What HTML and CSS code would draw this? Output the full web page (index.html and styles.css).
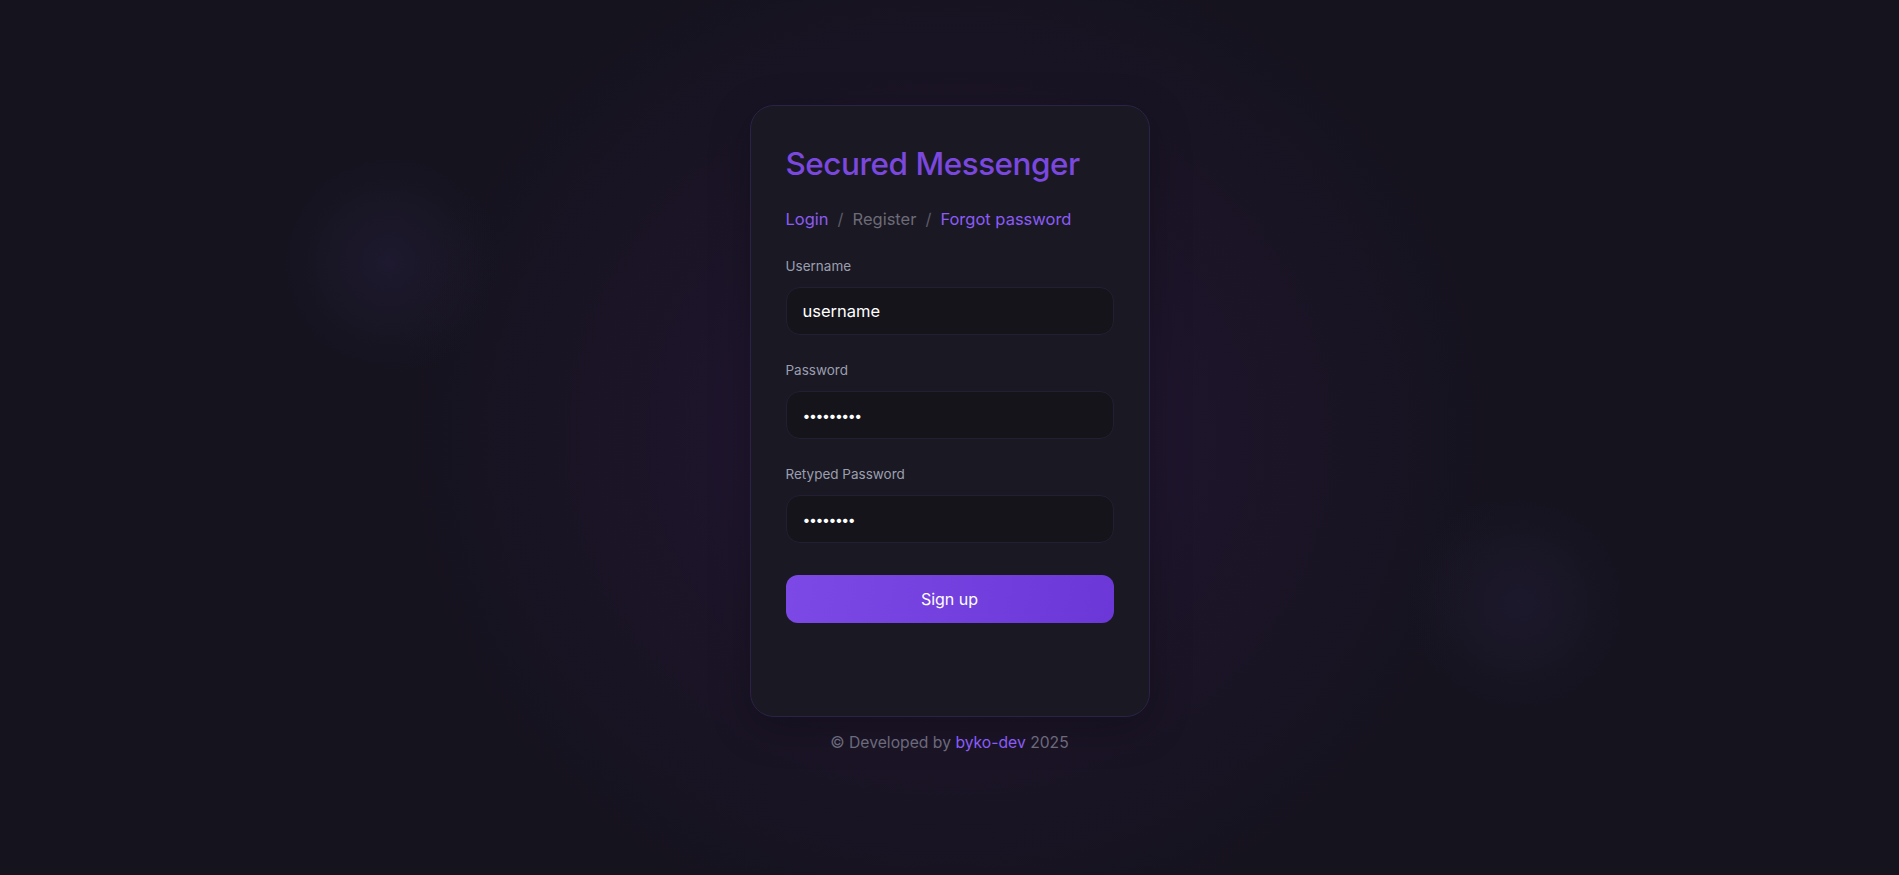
FILE: index.html
```html
<!DOCTYPE html>
<html lang="en">
<head>
<meta charset="utf-8">
<title>Secured Messenger</title>
<link rel="stylesheet" href="styles.css">
</head>
<body>
<main class="page">
  <section class="card">
    <h1 class="title">Secured Messenger</h1>
    <nav class="tabs">
      <a class="tab tab-link" href="#">Login</a>
      <span class="sep">/</span>
      <span class="tab tab-current">Register</span>
      <span class="sep">/</span>
      <a class="tab tab-link" href="#">Forgot password</a>
    </nav>
    <form class="form">
      <div class="field">
        <label class="label" for="u">Username</label>
        <input class="input" id="u" type="text" value="username">
      </div>
      <div class="field">
        <label class="label" for="p">Password</label>
        <input class="input input-pass" id="p" type="password" value="123456789">
      </div>
      <div class="field">
        <label class="label" for="r">Retyped Password</label>
        <input class="input input-pass" id="r" type="password" value="12345678">
      </div>
      <button class="btn" type="button">Sign up</button>
    </form>
    <div class="status"></div>
  </section>
  <footer class="footer">© Developed by <a class="footer-link" href="#">byko-dev</a> 2025</footer>
</main>
</body>
</html>
```

FILE: styles.css
```css
* { box-sizing: border-box; }
html, body { margin: 0; padding: 0; }
body {
  min-height: 100vh;
  background-color: #15131e;
  background-image:
    radial-gradient(circle at 20.5% 30%, rgba(40, 32, 66, 0.45) 0, rgba(40, 32, 66, 0) 110px),
    radial-gradient(circle at 80% 69%, rgba(40, 32, 66, 0.4) 0, rgba(40, 32, 66, 0) 110px),
    radial-gradient(ellipse 560px 520px at 50% 50%, rgba(42, 24, 62, 0.95) 0, rgba(34, 22, 50, 0.6) 45%, rgba(21, 19, 30, 0) 100%);
  font-family: Inter, "Noto Sans", sans-serif;
  color: #e8e8f0;
}
.page {
  display: flex;
  flex-direction: column;
  align-items: center;
  padding-top: 105px;
}
.card {
  width: 400px;
  background: #1a1822;
  border: 1px solid #2a2347;
  border-radius: 24px;
  padding: 38px 35px 0;
  box-shadow: 0 10px 40px rgba(0, 0, 0, 0.25);
}
.title {
  margin: 0;
  font-size: 31.5px;
  line-height: 40px;
  font-weight: 500;
  color: #7a47df;
  letter-spacing: -0.5px;
}
.tabs {
  margin-top: 23px;
  display: flex;
  align-items: center;
  gap: 9px;
  font-size: 16.5px;
  line-height: 24px;
}
.tab { text-decoration: none; }
.tab-link { color: #8b5cf6; }
.tab-current { color: #6c6b78; }
.sep { color: #5c5b68; }
.form {
  margin-top: 26px;
  display: flex;
  flex-direction: column;
}
.field {
  display: flex;
  flex-direction: column;
  gap: 12px;
  margin-bottom: 26px;
}
.label {
  font-size: 13.5px;
  line-height: 18px;
  color: #9a9fb0;
}
.input {
  height: 48px;
  width: 100%;
  background: #15141b;
  border: 1px solid #221f33;
  border-radius: 14px;
  padding: 0 16px;
  font-family: Inter, "Noto Sans", sans-serif;
  font-size: 16.5px;
  font-weight: 400;
  color: #ffffff;
  outline: none;
}
.input-pass {
  font-size: 14px;
  letter-spacing: -1.4px;
}
.btn {
  margin-top: 6px;
  height: 48px;
  width: 100%;
  border: none;
  border-radius: 12px;
  background: linear-gradient(100deg, #7c48e6 0%, #6b37d6 100%);
  color: #ffffff;
  font-family: Inter, "Noto Sans", sans-serif;
  font-size: 16px;
  font-weight: 400;
  cursor: pointer;
}
.status {
  height: 93px;
}
.footer {
  margin-top: 14px;
  font-size: 15.7px;
  line-height: 24px;
  color: #6c6a7c;
}
.footer-link {
  color: #8b5cf6;
  text-decoration: none;
}
```
